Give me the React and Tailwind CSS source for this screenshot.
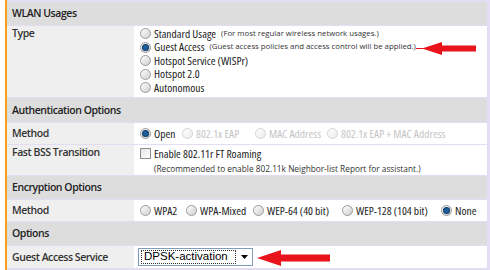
import React from 'react';

const font = "font-['Open_Sans','DejaVu_Sans',sans-serif]";

const Radio = ({ checked, disabled }) => (
  <span
    className={`relative inline-flex shrink-0 w-[11px] h-[11px] rounded-full border items-center justify-center ${
      disabled
        ? 'border-[#d4d4d4] bg-gradient-to-br from-white to-[#ececec]'
        : 'border-[#9a9a9a] bg-gradient-to-br from-white to-[#cfcfcf]'
    }`}
  >
    {checked && <span className="w-[5px] h-[5px] rounded-full bg-[#1d5e9c] ring-1 ring-[#0f3a66]" />}
  </span>
);

const Opt = ({ checked, disabled, label, note, className = '' }) => (
  <span className={`inline-flex shrink-0 items-center gap-[3px] whitespace-nowrap ${className}`}>
    <Radio checked={checked} disabled={disabled} />
    <span className={`text-[11.5px] [font-stretch:85%] ${disabled ? 'text-[#c4c4c4]' : 'text-[#222]'}`}>{label}</span>
    {note && <span className="text-[7.8px] text-[#333] ml-[2px]">{note}</span>}
  </span>
);

const Header = ({ title, h }) => (
  <div className={`${h} bg-[#dddddd] flex items-center pl-[5px] font-semibold tracking-[-0.45px] text-[#222] whitespace-nowrap`}>
    {title}
  </div>
);

const Row = ({ label, h, children, top }) => (
  <div className={`${h} flex`}>
    <div
      className={`w-[127px] shrink-0 bg-[#efefef] pl-[5px] font-semibold tracking-[-0.45px] text-[#333] whitespace-nowrap flex ${
        top ? 'items-start pt-[2px]' : 'items-center'
      }`}
    >
      {label}
    </div>
    <div className="flex-1 bg-white pl-[6px] flex flex-col justify-center whitespace-nowrap">{children}</div>
  </div>
);

const Arrow = ({ className, head = 14, shaft = 6, len = 55, neck = 20 }) => (
  <svg className={className} width={len} height={head + 2} viewBox={`0 0 ${len} ${head + 2}`}>
    <polygon
      fill="#e8131b"
      points={`0,${(head + 2) / 2} ${neck},1 ${neck},${(head + 2 - shaft) / 2} ${len},${(head + 2 - shaft) / 2} ${len},${(head + 2 + shaft) / 2} ${neck},${(head + 2 + shaft) / 2} ${neck},${head + 1}`}
    />
  </svg>
);

export default function App() {
  return (
    <div className={`relative w-[490px] h-[270px] bg-white flex overflow-hidden text-[10.5px] ${font}`}>
      <div className="w-[5px] shrink-0 bg-white" />
      <div className="w-[2px] shrink-0 bg-[#f7a11a]" />
      <div className="flex-1 flex flex-col gap-[1px] pt-[2px] pr-[3px] bg-[#e2ddf2] leading-none">
        <Header title="WLAN Usages" h="h-[23px]" />
        <Row label="Type" h="h-[71px]" top>
          <div className="flex flex-col pt-[1px] pb-[3px]">
            <Opt className="h-[13.5px]" label="Standard Usage" note="(For most regular wireless network usages.)" />
            <Opt className="h-[13.5px]" checked label="Guest Access" note="(Guest access policies and access control will be applied.)" />
            <Opt className="h-[13.5px]" label="Hotspot Service (WISPr)" />
            <Opt className="h-[13.5px]" label="Hotspot 2.0" />
            <Opt className="h-[13.5px]" label="Autonomous" />
          </div>
        </Row>
        <Header title="Authentication Options" h="h-[24px]" />
        <Row label="Method" h="h-[21px]">
          <div className="flex items-center">
            <Opt checked label="Open" className="w-[42px]" />
            <Opt disabled label="802.1x EAP" className="w-[73px]" />
            <Opt disabled label="MAC Address" className="w-[72px]" />
            <Opt disabled label="802.1x EAP + MAC Address" />
          </div>
        </Row>
        <Row label="Fast BSS Transition" h="h-[30px]" top>
          <div className="flex flex-col gap-[5px] pt-[1px]">
            <span className="inline-flex items-center gap-[3px] text-[#222]">
              <span className="w-[11px] h-[11px] border border-[#8e8e8e] bg-gradient-to-br from-[#e4e4e4] to-white" />
              <span className="text-[11.5px] [font-stretch:85%]">Enable 802.11r FT Roaming</span>
            </span>
            <span className="pl-[14px] text-[8.3px] text-[#333]">
              (Recommended to enable 802.11k Neighbor-list Report for assistant.)
            </span>
          </div>
        </Row>
        <Header title="Encryption Options" h="h-[23px]" />
        <Row label="Method" h="h-[21px]">
          <div className="flex items-center">
            <Opt label="WPA2" className="w-[46px]" />
            <Opt label="WPA-Mixed" className="w-[67px]" />
            <Opt label="WEP-64 (40 bit)" className="w-[89px]" />
            <Opt label="WEP-128 (104 bit)" className="w-[99px]" />
            <Opt checked label="None" />
          </div>
        </Row>
        <Header title="Options" h="h-[23px]" />
        <Row label="Guest Access Service" h="h-[22px]">
          <div className="w-[115px] h-[18px] -ml-[2px] border border-[#7f9db9] bg-white flex items-center font-['Liberation_Sans',Arial,sans-serif] text-[11.5px] text-black">
            <span className="flex-1 h-[14px] ml-[2px] border border-dotted border-[#333] flex items-center pl-[2px]">
              DPSK-activation
            </span>
            <span className="w-[16px] h-full flex items-center justify-center">
              <svg width="7" height="4" viewBox="0 0 7 4">
                <polygon points="0,0 7,0 3.5,4" fill="#000" />
              </svg>
            </span>
          </div>
        </Row>
      </div>

      <div className="absolute left-[416px] top-[48px] w-[7px] h-[1px] bg-[#e8131b]" />
      <Arrow className="absolute left-[422px] top-[41px]" head={13} shaft={6} len={54} />
      <Arrow className="absolute left-[257px] top-[249px]" head={16} shaft={7} len={73} neck={24} />
    </div>
  );
}
